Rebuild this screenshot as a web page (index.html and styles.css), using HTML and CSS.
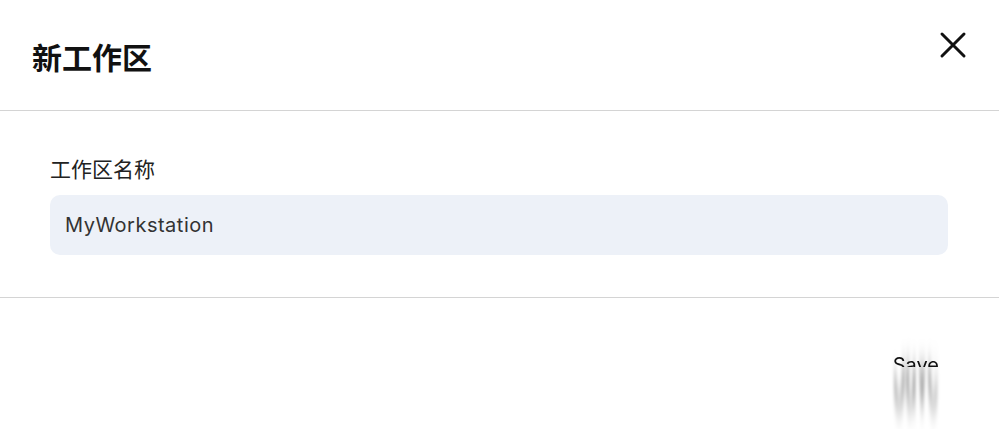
FILE: index.html
```html
<!DOCTYPE html>
<html lang="zh">
<head>
<meta charset="utf-8">
<link rel="stylesheet" href="styles.css">
</head>
<body>
<div class="dialog">
  <header class="head">
    <h1 class="title">新工作区</h1>
    <button class="close" aria-label="close">
      <svg width="28" height="28" viewBox="0 0 28 28"><path d="M3 3 L25 25 M25 3 L3 25" stroke="#111" stroke-width="3" stroke-linecap="round" fill="none"/></svg>
    </button>
  </header>
  <section class="body">
    <label class="label">工作区名称</label>
    <div class="input">MyWorkstation</div>
  </section>
  <footer class="foot">
    <span class="save" data-t="Save">Save</span>
  </footer>
</div>
</body>
</html>
```

FILE: styles.css
```css
html, body { margin: 0; background: #fff; }
body { font-family: "Inter", "Noto Sans CJK SC", sans-serif; color: #111; }
.dialog { width: 999px; height: 429px; overflow: hidden; }
.head {
  height: 110px;
  border-bottom: 1px solid #d4d4d4;
  display: flex; align-items: center; justify-content: space-between;
  padding: 0 32px 0 32px;
}
.title {
  margin: 0; font-family: "Noto Sans CJK SC", sans-serif;
  font-size: 30px; font-weight: 700; color: #111; line-height: 40px;
  margin-top: 2px;
}
.close { border: 0; background: none; padding: 0; width: 28px; height: 28px; margin-top: -20px; display: block; }
.close svg { display: block; }
.body {
  padding: 43px 51px 0 50px;
  height: 187px; box-sizing: border-box;
  border-bottom: 1px solid #d4d4d4;
  display: flex; flex-direction: column;
}
.label {
  font-family: "Noto Sans CJK SC", sans-serif; font-size: 21px;
  line-height: 28px; color: #222; margin-bottom: 13px;
}
.input {
  height: 60px; box-sizing: border-box; background: #edf1f8;
  border-radius: 10px; padding: 0 15px;
  display: flex; align-items: center;
  font-size: 20px; color: #333; letter-spacing: 0.5px;
}
.foot { display: flex; justify-content: flex-end; padding: 53px 60px 0 0; }
.save {
  position: relative; font-size: 20px; line-height: 28px;
  color: transparent;
  background: linear-gradient(#111 0 57%, transparent 57%);
  -webkit-background-clip: text; background-clip: text;
}
.save::after {
  content: attr(data-t); position: absolute; left: 0; top: 0;
  transform: scaleY(8); transform-origin: 0 16px;
  filter: blur(1.6px); color: transparent;
  background: linear-gradient(transparent 0 57%, rgba(0,0,0,0.7) 57%, rgba(0,0,0,0.2) 80%, rgba(0,0,0,0) 100%);
  -webkit-background-clip: text; background-clip: text;
}
```
